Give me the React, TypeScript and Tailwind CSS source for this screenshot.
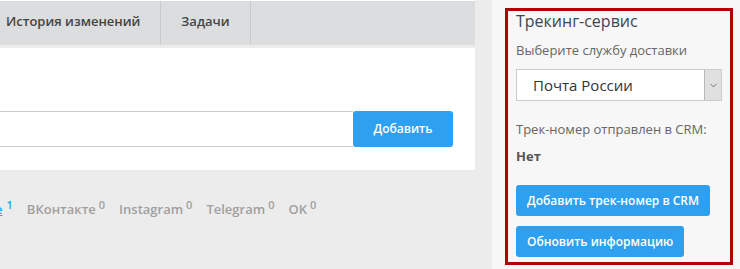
import { ChevronDown } from "lucide-react";

const socials = [
  { name: "ВКонтакте", count: 0 },
  { name: "Instagram", count: 0 },
  { name: "Telegram", count: 0 },
  { name: "OK", count: 0 },
];

function BlueButton({ children }: { children: React.ReactNode }) {
  return (
    <button className="h-[31px] px-[11px] rounded-[3px] bg-[#2f9ff0] text-white text-[12px] font-semibold leading-none whitespace-nowrap">
      {children}
    </button>
  );
}

export default function App() {
  return (
    <div
      className="flex w-[740px] h-[269px] overflow-hidden bg-[#ececec] text-[#555]"
      style={{ fontFamily: '"Open Sans", "Noto Sans", sans-serif' }}
    >
      {/* main column */}
      <div className="w-[475px] shrink-0 flex flex-col">
        <div className="h-[1px] bg-white" />
        <div className="flex h-[44px] bg-[#dcdddf] border-b-[3px] border-[#ececec] box-content">
          <div className="-ml-[14px] px-[20px] pt-[11px] text-[13px] font-semibold text-[#444] border-r border-[#c9cacc]">
            История изменений
          </div>
          <div className="px-[20px] pt-[11px] text-[13px] font-semibold text-[#444] border-r border-[#c9cacc]">
            Задачи
          </div>
        </div>

        <div className="h-[122px] bg-white flex items-start pt-[63px] pr-[22px]">
          <div className="flex-1 h-[36px] border-y border-[#cccccc]" />
          <button className="w-[100px] h-[36px] rounded-[3px] bg-[#2f9ff0] text-white text-[12px] font-semibold">
            Добавить
          </button>
        </div>

        <div className="flex items-start gap-[14px] pt-[30px] text-[13px] font-semibold text-[#a0a0a0] whitespace-nowrap">
          <span className="-ml-[20px] text-[#2f9ff0]">
            <span className="underline">Все</span>
            <sup className="ml-[4px] text-[11px]">1</sup>
          </span>
          {socials.map((s) => (
            <span key={s.name}>
              {s.name}
              <sup className="ml-[3px] text-[11px]">{s.count}</sup>
            </span>
          ))}
        </div>
      </div>

      {/* side column */}
      <div className="ml-[17px] flex-1 bg-[#f7f7f7] pl-[13px] pr-[7px] pt-[8px] pb-[4px]">
        <div className="h-full border-[3px] border-[#b30000] px-[8px]">
          <div className="text-[16px] text-[#3d4650] leading-[20px]">Трекинг-сервис</div>
          <div className="mt-[10px] text-[13px] text-[#666] leading-[18px]">Выберите службу доставки</div>
          <div className="mt-[10px] flex h-[32px] bg-white border border-[#cccccc]">
            <div className="flex-1 pl-[16px] flex items-center text-[15px] text-[#333]">Почта России</div>
            <div className="w-[17px] bg-[#e0e0e0] border-l border-[#b8b8b8] flex items-center justify-center">
              <ChevronDown size={11} strokeWidth={1.5} className="text-[#444]" />
            </div>
          </div>
          <div className="mt-[19px] text-[13px] text-[#666] leading-[18px]">Трек-номер отправлен в CRM:</div>
          <div className="mt-[9px] text-[13px] font-bold text-[#555] leading-[18px]">Нет</div>
          <div className="mt-[20px] flex flex-col items-start gap-[10px]">
            <BlueButton>Добавить трек-номер в CRM</BlueButton>
            <BlueButton>Обновить информацию</BlueButton>
          </div>
        </div>
      </div>
    </div>
  );
}
